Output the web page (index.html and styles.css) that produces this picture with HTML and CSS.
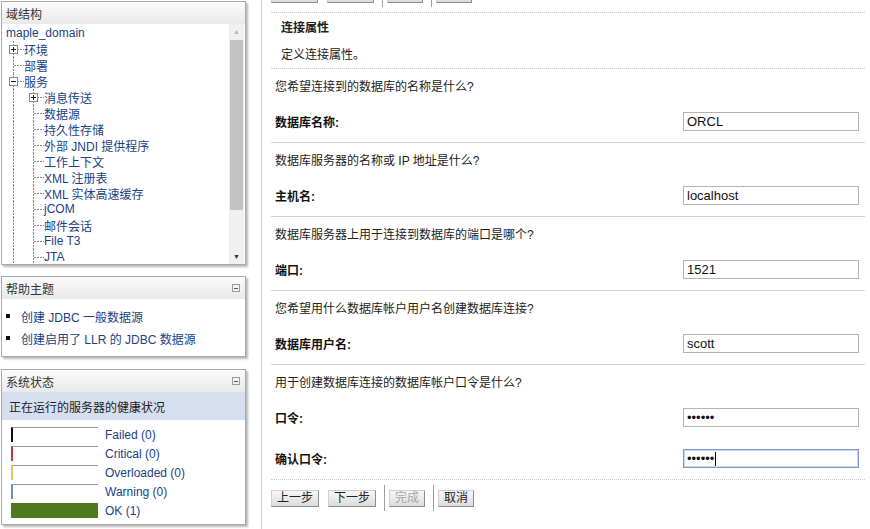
FILE: index.html
```html
<!DOCTYPE html>
<html lang="zh">
<head>
<meta charset="utf-8">
<title>创建 JDBC 数据源</title>
<link rel="stylesheet" href="styles.css">
</head>
<body>
<div class="page">
  <aside class="left">
    <section class="panel tree-panel">
      <div class="ph">域结构</div>
      <div class="tree-body">
        <div class="tree">
          <div class="tn root"><a>maple_domain</a></div>
          <div class="tn"><span class="con"><i class="box plus"></i></span><a>环境</a></div>
          <div class="tn"><span class="con"></span><a>部署</a></div>
          <div class="tn"><span class="con"><i class="box"></i></span><a>服务</a></div>
          <div class="tn"><span class="ind"></span><span class="con"><i class="box plus"></i></span><a>消息传送</a></div>
          <div class="tn"><span class="ind"></span><span class="con"></span><a>数据源</a></div>
          <div class="tn"><span class="ind"></span><span class="con"></span><a>持久性存储</a></div>
          <div class="tn"><span class="ind"></span><span class="con"></span><a>外部 JNDI 提供程序</a></div>
          <div class="tn"><span class="ind"></span><span class="con"></span><a>工作上下文</a></div>
          <div class="tn"><span class="ind"></span><span class="con"></span><a>XML 注册表</a></div>
          <div class="tn"><span class="ind"></span><span class="con"></span><a>XML 实体高速缓存</a></div>
          <div class="tn"><span class="ind"></span><span class="con"></span><a>jCOM</a></div>
          <div class="tn"><span class="ind"></span><span class="con"></span><a>邮件会话</a></div>
          <div class="tn"><span class="ind"></span><span class="con"></span><a>File T3</a></div>
          <div class="tn"><span class="ind"></span><span class="con"></span><a>JTA</a></div>
        </div>
        <div class="sb">
          <div class="sb-btn up">&#9650;</div>
          <div class="sb-track"><div class="sb-thumb"></div></div>
          <div class="sb-btn down">&#9660;</div>
        </div>
      </div>
    </section>

    <section class="panel help-panel">
      <div class="ph"><span>帮助主题</span><i class="collapse"></i></div>
      <ul class="help-list">
        <li><a>创建 JDBC 一般数据源</a></li>
        <li><a>创建启用了 LLR 的 JDBC 数据源</a></li>
      </ul>
    </section>

    <section class="panel status-panel">
      <div class="ph"><span>系统状态</span><i class="collapse"></i></div>
      <div class="sub">正在运行的服务器的健康状况</div>
      <div class="health">
        <div class="hrow"><span class="bar failed"></span><a>Failed (0)</a></div>
        <div class="hrow"><span class="bar critical"></span><a>Critical (0)</a></div>
        <div class="hrow"><span class="bar overloaded"></span><a>Overloaded (0)</a></div>
        <div class="hrow"><span class="bar warning"></span><a>Warning (0)</a></div>
        <div class="hrow"><span class="bar ok"></span><a>OK (1)</a></div>
      </div>
    </section>
  </aside>

  <main class="right">
    <div class="top-strip" aria-hidden="true">
      <div class="btnbar">
        <span class="btn ghost w3"></span>
        <span class="btn ghost w3 gap"></span>
        <span class="vsep"></span>
        <span class="btn ghost w2"></span>
        <span class="vsep"></span>
        <span class="btn ghost w2"></span>
      </div>
    </div>

    <div class="intro">
      <div class="title">连接属性</div>
      <div class="desc">定义连接属性。</div>
    </div>

    <div class="frow">
      <div class="q">您希望连接到的数据库的名称是什么?</div>
      <div class="field"><label>数据库名称:</label><input class="inp" type="text" value="ORCL"></div>
    </div>
    <div class="frow">
      <div class="q">数据库服务器的名称或 IP 地址是什么?</div>
      <div class="field"><label>主机名:</label><input class="inp" type="text" value="localhost"></div>
    </div>
    <div class="frow">
      <div class="q">数据库服务器上用于连接到数据库的端口是哪个?</div>
      <div class="field"><label>端口:</label><input class="inp" type="text" value="1521"></div>
    </div>
    <div class="frow">
      <div class="q">您希望用什么数据库帐户用户名创建数据库连接?</div>
      <div class="field"><label>数据库用户名:</label><input class="inp" type="text" value="scott"></div>
    </div>
    <div class="frow last">
      <div class="q">用于创建数据库连接的数据库帐户口令是什么?</div>
      <div class="field"><label>口令:</label><input class="inp" type="password" value="tiger1"></div>
      <div class="field second"><label>确认口令:</label><span class="inp-wrap"><input class="inp focus" type="password" value="tiger1"><span class="caret"></span></span></div>
    </div>

    <div class="btnbar bottom">
      <button class="btn">上一步</button>
      <button class="btn gap">下一步</button>
      <span class="vsep"></span>
      <button class="btn dis">完成</button>
      <span class="vsep"></span>
      <button class="btn">取消</button>
    </div>
  </main>
</div>
</body>
</html>
```

FILE: styles.css
```css
* { box-sizing: border-box; }
html, body { margin: 0; padding: 0; background: #fff; }
body {
  font-family: "Liberation Sans", "Noto Sans CJK SC", sans-serif;
  font-size: 12px;
  color: #333;
  width: 870px;
  height: 529px;
  overflow: hidden;
}
a { color: #203f86; text-decoration: none; }

.page { display: flex; align-items: flex-start; }

/* ---------- left column ---------- */
.left {
  width: 247px;
  flex: none;
  padding: 1px 0 0 1px;
  display: flex;
  flex-direction: column;
}
.panel {
  width: 245px;
  border: 1px solid #a9a9a9;
  background: #fff;
  box-shadow: 2px 2px 2px rgba(0,0,0,0.28);
}
.ph {
  height: 22px;
  display: flex;
  align-items: center;
  justify-content: space-between;
  padding: 0 4px 0 4px;
  background: linear-gradient(#fbfbfb, #e9e9e9);
  color: #333;
}
.collapse {
  width: 8px; height: 8px;
  border: 1px solid #999;
  position: relative;
  margin-right: 1px;
}
.collapse::before {
  content: ""; position: absolute;
  left: 1px; right: 1px; top: 3px;
  border-top: 1px solid #555;
}

/* tree */
.tree-panel { height: 264px; }
.tree-body { display: flex; height: 240px; }
.tree { flex: 1; padding: 1px 0 0 3px; overflow: hidden; }
.tn { display: flex; align-items: center; height: 16px; white-space: nowrap; }
.root { padding-left: 1px; }
.ind, .con { position: relative; flex: none; height: 16px; }
.ind { width: 20px; }
.con { width: 19px; }
.ind::before, .con::before {
  content: ""; position: absolute;
  left: 8px; top: 0; bottom: 0; width: 1px;
  background: repeating-linear-gradient(to bottom, #8a8a8a 0 2px, transparent 2px 3px);
}
.con::after {
  content: ""; position: absolute;
  left: 9px; top: 8px; width: 10px; height: 1px;
  background: repeating-linear-gradient(to right, #8a8a8a 0 2px, transparent 2px 3px);
}
.box {
  position: absolute; z-index: 1;
  left: 4px; top: 4px; width: 9px; height: 9px;
  border: 1px solid #8a8a8a; background: #fff;
}
.box::before {
  content: ""; position: absolute;
  left: 1px; top: 3px; width: 5px; height: 1px; background: #222;
}
.box.plus::after {
  content: ""; position: absolute;
  left: 3px; top: 1px; width: 1px; height: 5px; background: #222;
}
.sb {
  width: 15px; flex: none; margin-right: 1px;
  display: flex; flex-direction: column;
  background: #f0f0f0;
}
.sb-btn {
  height: 15px; font-size: 7px; line-height: 15px;
  text-align: center;
}
.sb-btn.up { color: #b5b5b5; }
.sb-btn.down { color: #333; margin-top: auto; }
.sb-track { flex: 1; padding: 1px 1px 0; }
.sb-thumb { height: 170px; background: #c2c2c2; }

/* help */
.help-panel { margin-top: 11px; }
.help-list { list-style: none; margin: 0; padding: 6px 0 7px 4px; }
.help-list li { height: 22px; display: flex; align-items: center; }
.help-list li::before {
  content: ""; width: 4px; height: 4px; background: #111;
  margin-right: 11px; flex: none;
}

/* status */
.status-panel { margin-top: 12px; }
.sub {
  height: 28px; display: flex; align-items: center;
  padding-left: 7px; background: #d5dff0; color: #222;
}
.health { padding: 7px 0 6px 9px; display: flex; flex-direction: column; gap: 4px; }
.hrow { display: flex; align-items: center; height: 15px; }
.bar {
  width: 87px; height: 15px; flex: none; margin-right: 7px;
  border-top: 1px solid #9a9a9a; border-left: 2px solid #111; background: #fff;
}
.bar.critical { border-left-color: #c0393b; }
.bar.overloaded { border-left-color: #d8c86a; }
.bar.warning { border-left-color: #6d8fb8; }
.bar.ok { background: #4c7a1d; border: none; }

/* ---------- right column ---------- */
.right {
  flex: 1;
  margin-left: 14px;
  border-left: 1px solid #cdcdcd;
  min-height: 529px;
  padding: 0 5px 0 9px;
}
.top-strip { height: 7px; overflow: hidden; }
.top-strip .btnbar { margin-top: -19px; }

.btnbar { display: flex; align-items: center; height: 26px; }
.btn {
  font: inherit; font-size: 12px; color: #222;
  height: 17px; padding: 0 5px; line-height: 15px;
  border: 1px solid; border-color: #cfcfcf #8e8e8e #8e8e8e #cfcfcf;
  background: linear-gradient(#f7f7f7, #dcdcdc);
  margin: 0;
}
.btn.ghost { display: block; }
.btn.w3 { width: 47px; }
.btn.w2 { width: 36px; }
.btn.gap { margin-left: 9px; }
.btn.dis { color: #a6a6a6; }
.vsep { width: 1px; height: 26px; background: #9d9d9d; margin: 0 4px 0 8px; }
.btnbar.bottom { margin-top: 5px; }

.intro {
  margin-top: 5px;
  border-top: 1px dotted #c9c9c9;
  border-bottom: 1px dotted #c9c9c9;
  padding: 7px 0 5px 10px;
  color: #222;
}
.title { font-weight: bold; line-height: 16px; }
.desc { margin-top: 11px; line-height: 16px; }

.frow {
  padding: 10px 0 11px 4px;
  border-bottom: 1px solid #d2d2d2;
  color: #222;
}
.frow.last { border-bottom: 1px dotted #c9c9c9; }
.q { line-height: 16px; }
.field {
  display: grid;
  grid-template-columns: 408px 176px;
  align-items: center;
  margin-top: 17px;
  height: 19px;
}
.field.second { margin-top: 22px; }
.field label { font-weight: bold; color: #111; }
.inp {
  width: 176px; height: 19px;
  border: 1px solid #b3b3b3;
  padding: 0 3px;
  font-family: "Liberation Sans", sans-serif; font-size: 13px; color: #111;
  background: #fff;
  margin: 0;
  outline: none;
}
.inp-wrap { position: relative; display: block; width: 176px; height: 19px; }
.inp.focus { border-color: #7f9ccc; box-shadow: inset 0 0 0 1px #c7d6ef; }
.caret {
  position: absolute; left: 32px; top: 3px;
  width: 1px; height: 14px; background: #000;
}
```
